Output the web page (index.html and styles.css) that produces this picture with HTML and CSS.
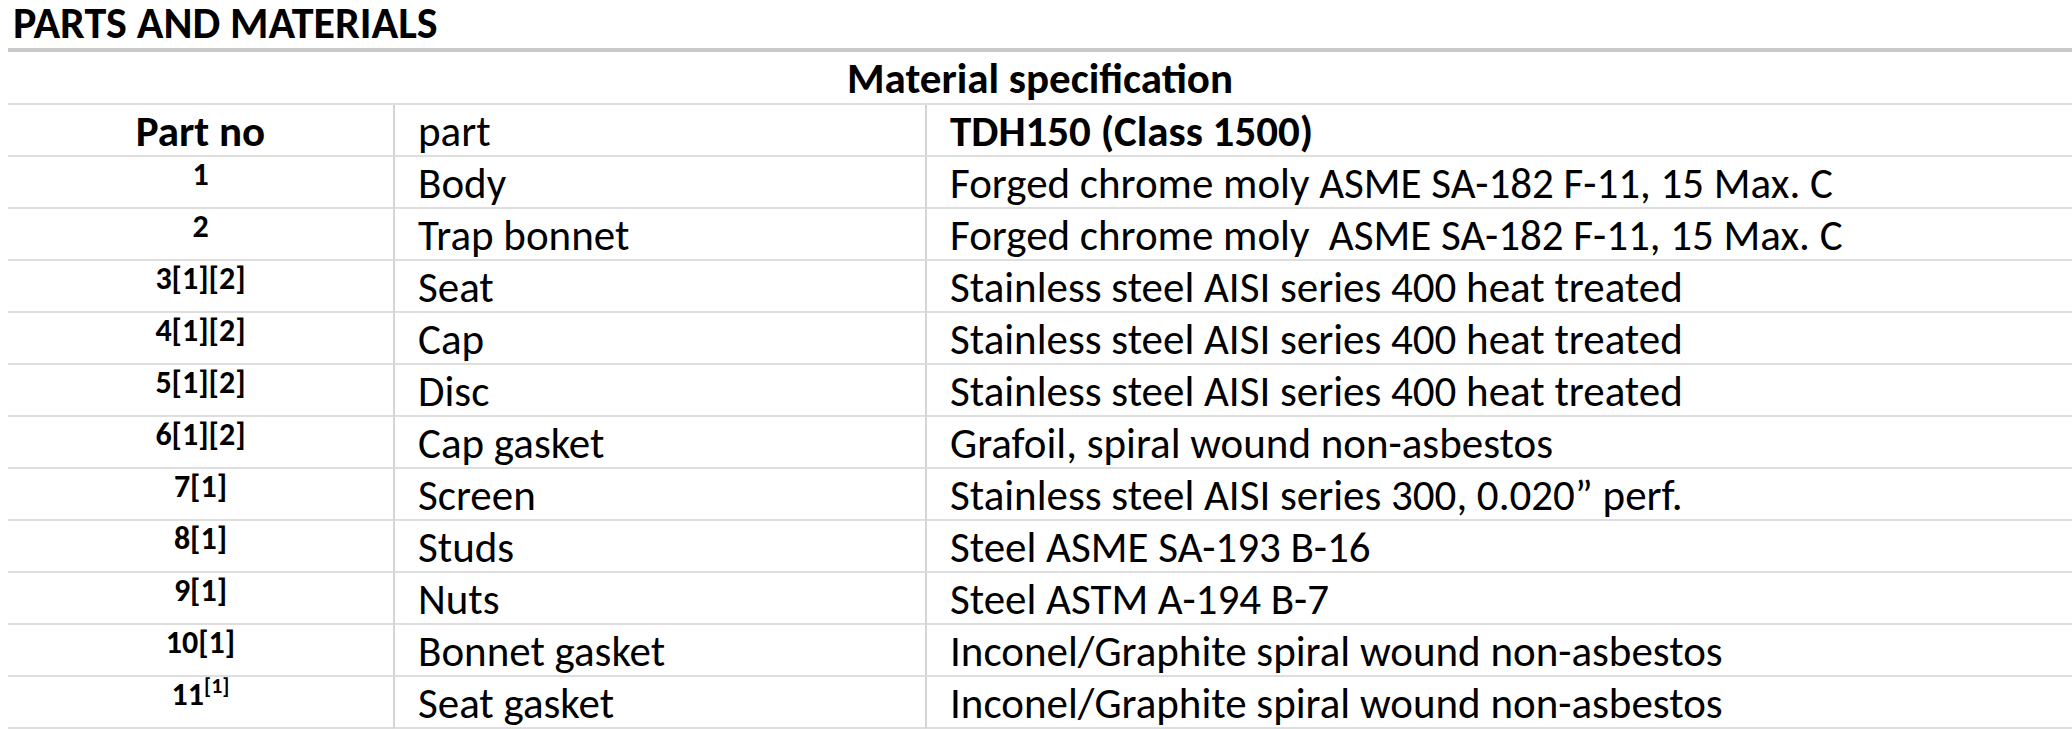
FILE: index.html
```html
<!DOCTYPE html>
<html lang="en">
<head>
<meta charset="utf-8">
<title>Parts and materials</title>
<link rel="stylesheet" href="styles.css">
</head>
<body>
<h2 class="title">PARTS AND MATERIALS</h2>
<table class="spec">
  <colgroup>
    <col class="c-no">
    <col class="c-part">
    <col class="c-mat">
  </colgroup>
  <tbody>
    <tr><td class="head center" colspan="3">Material specification</td></tr>
    <tr><td class="head center">Part no</td><td>part</td><td class="head">TDH150 (Class 1500)</td></tr>
    <tr><td class="center"><span class="no">1</span></td><td>Body</td><td>Forged chrome moly ASME SA-182 F-11, 15 Max. C</td></tr>
    <tr><td class="center"><span class="no">2</span></td><td>Trap bonnet</td><td>Forged chrome moly&nbsp; ASME SA-182 F-11, 15 Max. C</td></tr>
    <tr><td class="center"><span class="no">3[1][2]</span></td><td>Seat</td><td>Stainless steel AISI series 400 heat treated</td></tr>
    <tr><td class="center"><span class="no">4[1][2]</span></td><td>Cap</td><td>Stainless steel AISI series 400 heat treated</td></tr>
    <tr><td class="center"><span class="no">5[1][2]</span></td><td>Disc</td><td>Stainless steel AISI series 400 heat treated</td></tr>
    <tr><td class="center"><span class="no">6[1][2]</span></td><td>Cap gasket</td><td>Grafoil, spiral wound non-asbestos</td></tr>
    <tr><td class="center"><span class="no">7[1]</span></td><td>Screen</td><td>Stainless steel AISI series 300, 0.020” perf.</td></tr>
    <tr><td class="center"><span class="no">8[1]</span></td><td>Studs</td><td>Steel ASME SA-193 B-16</td></tr>
    <tr><td class="center"><span class="no">9[1]</span></td><td>Nuts</td><td>Steel ASTM A-194 B-7</td></tr>
    <tr><td class="center"><span class="no">10[1]</span></td><td>Bonnet gasket</td><td>Inconel/Graphite spiral wound non-asbestos</td></tr>
    <tr><td class="center"><span class="no">11<sup class="ref">[1]</sup></span></td><td>Seat gasket</td><td>Inconel/Graphite spiral wound non-asbestos</td></tr>
  </tbody>
</table>
</body>
</html>
```
FILE: styles.css
```css
html, body {
  margin: 0;
  padding: 0;
  background: #ffffff;
  overflow: hidden;
}

body {
  padding: 0 0 0 8px;
  font-family: "Carlito", "Lato", "Liberation Sans", sans-serif;
  color: #000000;
}

.title {
  margin: 0;
  padding: 0 0 0 5px;
  height: 48px;
  font-size: 44px;
  line-height: 46px;
  font-weight: 700;
  border-bottom: 4px solid #c8c8c8;
}

.spec {
  width: 2064px;
  border-collapse: separate;
  border-spacing: 0;
  table-layout: fixed;
  font-size: 43px;
}

.c-no { width: 385px; }
.c-part { width: 532px; }
.c-mat { width: auto; }

.spec td {
  padding: 3px 23px 0;
  line-height: 47px;
  border-bottom: 2px solid #dedede;
  white-space: nowrap;
  vertical-align: top;
}

.spec td + td {
  border-left: 2px solid #d4d4d4;
}

.spec tr:first-child td {
  line-height: 48px;
}

.head {
  font-weight: 700;
}

.center {
  text-align: center;
}

.no {
  font-size: 32px;
  font-weight: 700;
  line-height: 30px;
  vertical-align: 13px;
}

.ref {
  font-size: 22px;
  line-height: 10px;
  vertical-align: 12px;
}
```
